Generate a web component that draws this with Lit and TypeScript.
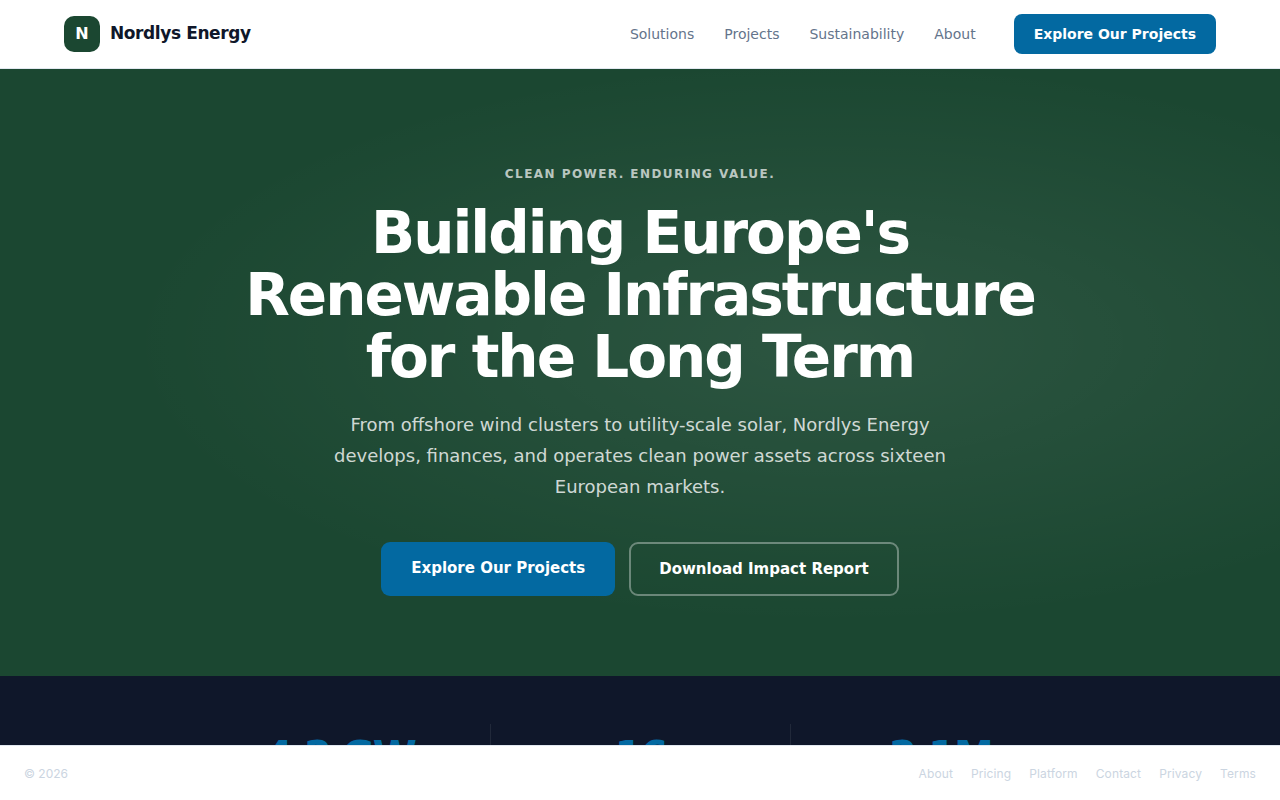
import { LitElement, html, css } from "lit";
import { customElement } from "lit/decorators.js";

const NAV = ["Solutions", "Projects", "Sustainability", "About"];
const FOOTER = ["About", "Pricing", "Platform", "Contact", "Privacy", "Terms"];
const STATS = [
  { value: "4.2 GW", label: "Installed capacity" },
  { value: "16", label: "European markets" },
  { value: "2.1M", label: "Homes powered" },
];

@customElement("app-root")
export class AppRoot extends LitElement {
  static styles = css`
    :host {
      display: flex;
      flex-direction: column;
      height: 100vh;
      font-family: "DejaVu Sans", sans-serif;
      color: #0f172a;
      background: #fff;
    }
    * {
      box-sizing: border-box;
    }
    a {
      color: inherit;
      text-decoration: none;
    }
    .page {
      flex: 1;
      min-height: 0;
      overflow-y: auto;
      scrollbar-width: none;
    }
    .header {
      display: flex;
      align-items: center;
      justify-content: space-between;
      padding: 14px 64px;
      border-bottom: 1px solid #e2e8f0;
      background: #fff;
    }
    .brand {
      display: flex;
      align-items: center;
      gap: 10px;
      font-size: 17px;
      line-height: 18px;
      font-weight: 700;
      letter-spacing: -0.4px;
    }
    .name {
      padding-bottom: 2px;
    }
    .mark {
      display: grid;
      place-items: center;
      width: 36px;
      height: 36px;
      border-radius: 10px;
      background: #1b4731;
      color: #fff;
      font-size: 16px;
      letter-spacing: 0;
    }
    .nav {
      display: flex;
      align-items: center;
      gap: 30px;
      font-size: 14px;
      line-height: 16px;
      color: #64748b;
    }
    .cta {
      margin-left: 8px;
      padding: 12px 20px;
      border-radius: 8px;
      background: #0369a1;
      color: #fff;
      font-weight: 600;
    }
    .hero {
      display: flex;
      flex-direction: column;
      align-items: center;
      padding: 96px 24px 80px;
      text-align: center;
      color: #fff;
      background:
        radial-gradient(ellipse at 65% 45%, rgba(255, 255, 255, 0.08) 0%, transparent 60%),
        #1b4731;
    }
    .eyebrow {
      margin: 0 0 18px;
      font-size: 12px;
      line-height: 19px;
      font-weight: 700;
      letter-spacing: 0.12em;
      text-transform: uppercase;
      color: rgba(255, 255, 255, 0.7);
    }
    h1 {
      max-width: 820px;
      margin: 0 0 21px;
      font-size: 58px;
      line-height: 62px;
      font-weight: 800;
      letter-spacing: -2px;
    }
    .lead {
      max-width: 620px;
      margin: 0 0 40px;
      font-size: 18px;
      line-height: 31px;
      color: rgba(255, 255, 255, 0.8);
    }
    .actions {
      display: flex;
      flex-wrap: wrap;
      justify-content: center;
      gap: 14px;
      font-size: 15px;
      line-height: 20px;
      font-weight: 600;
    }
    .primary {
      padding: 16px 30px;
      border-radius: 9px;
      background: #0369a1;
    }
    .outline {
      padding: 15px 28px;
      border: 2px solid rgba(255, 255, 255, 0.35);
      border-radius: 9px;
    }
    .stats {
      padding: 48px 24px;
      background: #0f172a;
    }
    .grid {
      display: grid;
      grid-template-columns: repeat(3, 1fr);
      max-width: 900px;
      margin: 0 auto;
      text-align: center;
    }
    .stat + .stat {
      border-left: 1px solid rgba(255, 255, 255, 0.08);
    }
    .value {
      padding-top: 8px;
      font-size: 40px;
      line-height: 48px;
      font-weight: 800;
      letter-spacing: -2px;
      color: #0369a1;
    }
    .label {
      margin-top: 8px;
      font-size: 14px;
      line-height: 20px;
      color: #94a3b8;
    }
    .footer {
      display: flex;
      align-items: center;
      justify-content: space-between;
      padding: 19px 24px 17px;
      border-top: 1px solid #e2e8f0;
      background: #fff;
      font-family: Inter, sans-serif;
      font-size: 12px;
      line-height: 18px;
      color: #cbd5e1;
    }
    .links {
      display: flex;
      gap: 18px;
      letter-spacing: 0.01em;
    }
  `;

  render() {
    return html`
      <div class="page">
        <header class="header">
          <a class="brand" href="#"><span class="mark">N</span><span class="name">Nordlys Energy</span></a>
          <nav class="nav">
            ${NAV.map((item) => html`<a href="#">${item}</a>`)}
            <a class="cta" href="#">Explore Our Projects</a>
          </nav>
        </header>
        <section class="hero">
          <p class="eyebrow">Clean power. Enduring value.</p>
          <h1>Building Europe's Renewable Infrastructure for the Long Term</h1>
          <p class="lead">
            From offshore wind clusters to utility-scale solar, Nordlys Energy develops, finances,
            and operates clean power assets across sixteen European markets.
          </p>
          <div class="actions">
            <a class="primary" href="#">Explore Our Projects</a>
            <a class="outline" href="#">Download Impact Report</a>
          </div>
        </section>
        <section class="stats">
          <div class="grid">
            ${STATS.map(
              (s) => html`<div class="stat">
                <div class="value">${s.value}</div>
                <div class="label">${s.label}</div>
              </div>`
            )}
          </div>
        </section>
      </div>
      <footer class="footer">
        <span>© 2026</span>
        <nav class="links">${FOOTER.map((item) => html`<a href="#">${item}</a>`)}</nav>
      </footer>
    `;
  }
}
